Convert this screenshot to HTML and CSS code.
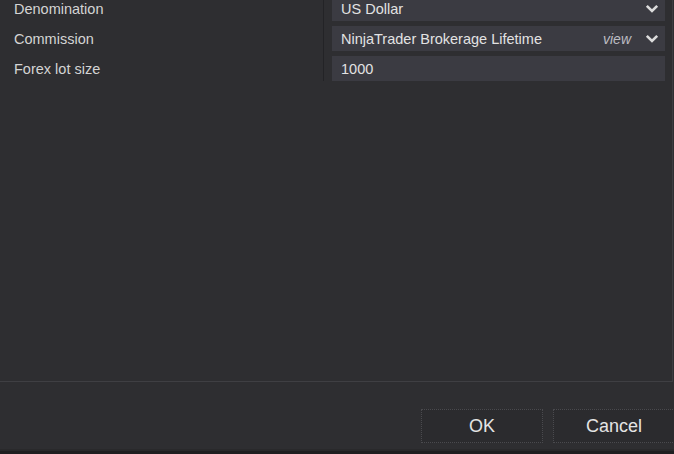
FILE: index.html
```html
<!DOCTYPE html>
<html>
<head>
<meta charset="utf-8">
<link rel="stylesheet" href="styles.css">
</head>
<body>
<div class="window">
  <div class="panel">
    <div class="props">
      <div class="labels">
        <div class="label">Denomination</div>
        <div class="label">Commission</div>
        <div class="label">Forex lot size</div>
      </div>
      <div class="sep"></div>
      <div class="fields">
        <div class="field">
          <span class="value">US Dollar</span>
          <svg class="chev" width="14" height="9" viewBox="0 0 14 9"><path d="M1.8 1.8 L7 7 L12.2 1.8" fill="none" stroke="#dcdcdc" stroke-width="2.6"/></svg>
        </div>
        <div class="field">
          <span class="value">NinjaTrader Brokerage Lifetime</span>
          <span class="view">view</span>
          <svg class="chev" width="14" height="9" viewBox="0 0 14 9"><path d="M1.8 1.8 L7 7 L12.2 1.8" fill="none" stroke="#dcdcdc" stroke-width="2.6"/></svg>
        </div>
        <div class="field">
          <span class="value">1000</span>
        </div>
      </div>
    </div>
  </div>
  <div class="footer">
    <button class="btn">OK</button>
    <button class="btn">Cancel</button>
  </div>
  <div class="bottom"></div>
</div>
</body>
</html>
```
FILE: styles.css
```css
html, body {
  margin: 0;
  padding: 0;
  background: #2e2e31;
  overflow: hidden;
}
body {
  width: 674px;
  height: 454px;
  font-family: "Liberation Sans", Arial, sans-serif;
  color: #d6d6d6;
}
.window {
  display: flex;
  flex-direction: column;
  height: 454px;
}
.panel {
  height: 381px;
  width: 672px;
  border-right: 1px solid #3d3d41;
  border-bottom: 1px solid #3f3f43;
  overflow: hidden;
}
.props {
  display: grid;
  grid-template-columns: 323px 1px 1fr;
  margin-top: -4px;
}
.labels, .fields {
  display: flex;
  flex-direction: column;
  gap: 5px;
}
.label {
  height: 25px;
  line-height: 26px;
  padding-left: 14px;
  font-size: 14.5px;
  color: #d4d4d4;
}
.sep {
  background: #232326;
  margin-top: 4px;
  height: 81px;
}
.fields {
  padding-left: 8px;
  padding-right: 7px;
}
.field {
  height: 25px;
  background: #3b3b42;
  display: flex;
  align-items: center;
  padding: 1px 6px 0 9px;
  box-sizing: border-box;
  font-size: 14.5px;
  color: #e2e2e2;
}
.value {
  flex: 1;
}
.view {
  font-style: italic;
  color: #bdbdc2;
  font-size: 14px;
  margin-right: 14px;
}
.chev {
  display: block;
  margin-top: -1px;
}
.footer {
  height: 67px;
  display: flex;
  align-items: flex-start;
  padding-top: 27px;
  padding-left: 421px;
  gap: 10px;
  box-sizing: border-box;
  overflow: hidden;
}
.btn {
  flex: none;
  width: 122px;
  height: 34px;
  background: #2b2b2e;
  border: 1px dotted #4a4a4e;
  color: #e4e4e4;
  font-family: "Liberation Sans", Arial, sans-serif;
  font-size: 18px;
  padding: 0;
}
.bottom {
  flex: 1;
  background: #1f1f21;
  border-top: 2px solid #29292b;
}
```
